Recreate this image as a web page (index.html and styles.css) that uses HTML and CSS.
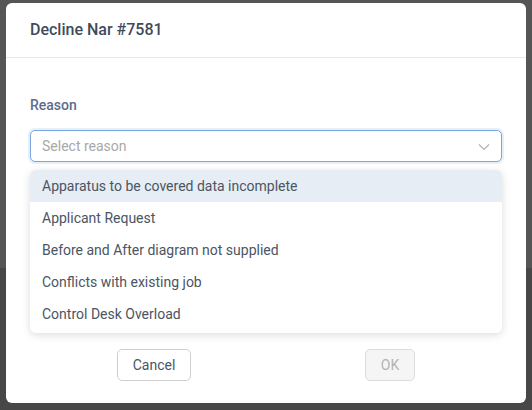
FILE: index.html
```html
<!DOCTYPE html>
<html>
<head>
<meta charset="utf-8">
<link rel="stylesheet" href="styles.css">
</head>
<body>
<div class="modal">
  <div class="modal-header">
    <h2 class="title">Decline Nar #7581</h2>
  </div>
  <div class="modal-body">
    <label class="label">Reason</label>
    <div class="select-wrap">
      <div class="select">
        <span class="placeholder">Select reason</span>
        <svg class="chevron" width="12" height="8" viewBox="0 0 12 8"><path d="M1 1.5 L6 6.5 L11 1.5" fill="none" stroke="#b3b3b3" stroke-width="1.2"/></svg>
      </div>
      <ul class="menu">
        <li class="item active">Apparatus to be covered data incomplete</li>
        <li class="item">Applicant Request</li>
        <li class="item">Before and After diagram not supplied</li>
        <li class="item">Conflicts with existing job</li>
        <li class="item">Control Desk Overload</li>
      </ul>
    </div>
  </div>
  <div class="modal-footer">
    <div class="col"><button class="btn">Cancel</button></div>
    <div class="col"><button class="btn btn-disabled">OK</button></div>
  </div>
</div>
</body>
</html>
```
FILE: styles.css
```css
* { box-sizing: border-box; }
html, body { margin: 0; height: 100%; }
body {
  font-family: Roboto, "Liberation Sans", sans-serif;
  background: linear-gradient(#555555 0, #555555 268px, #474747 268px);
  padding: 3px 6px 7px 6px;
}
.modal {
  background: #fff;
  border-radius: 6px;
  height: 400px;
  display: flex;
  flex-direction: column;
}
.modal-header {
  height: 55px;
  border-bottom: 1px solid #e6e6e6;
  display: flex;
  align-items: center;
  padding: 0 24px 1px;
}
.title {
  margin: 0;
  font-size: 16px;
  font-weight: 500;
  color: #3f4b5d;
}
.modal-body {
  padding: 37px 24px 187px;
}
.label {
  display: block;
  font-size: 14px;
  line-height: 20px;
  font-weight: 500;
  color: #5a6d8b;
  margin-bottom: 15px;
}
.select-wrap { position: relative; }
.select {
  height: 32px;
  border: 1px solid #78a5dc;
  border-radius: 5px;
  box-shadow: 0 0 0 2px rgba(120, 165, 220, 0.18);
  display: flex;
  align-items: center;
  justify-content: space-between;
  padding: 0 11px 0 11px;
}
.placeholder { font-size: 14px; color: #a8a8a8; }
.chevron { margin-top: 1px; }
.menu {
  position: absolute;
  top: 40px;
  left: 0;
  right: 0;
  margin: 0;
  padding: 0 0 3px;
  list-style: none;
  background: #fff;
  border-radius: 6px;
  box-shadow: 0 2px 8px rgba(0, 0, 0, 0.14);
  overflow: hidden;
}
.item {
  height: 32px;
  line-height: 32px;
  padding: 0 12px;
  font-size: 14px;
  color: #4b5563;
}
.item.active { background: #e6edf5; }
.modal-footer {
  display: flex;
  padding: 0 18px 0 30px;
}
.col { flex: 1; display: flex; justify-content: center; }
.btn {
  font-family: Roboto, "Liberation Sans", sans-serif;
  height: 32px;
  padding: 0 15px;
  font-size: 14px;
  color: #4a5568;
  background: #fff;
  border: 1px solid #cfcfcf;
  border-radius: 5px;
  min-width: 50px;
}
.btn-disabled {
  background: #f5f5f5;
  border-color: #dcdcdc;
  color: #b3b3b3;
}
```
